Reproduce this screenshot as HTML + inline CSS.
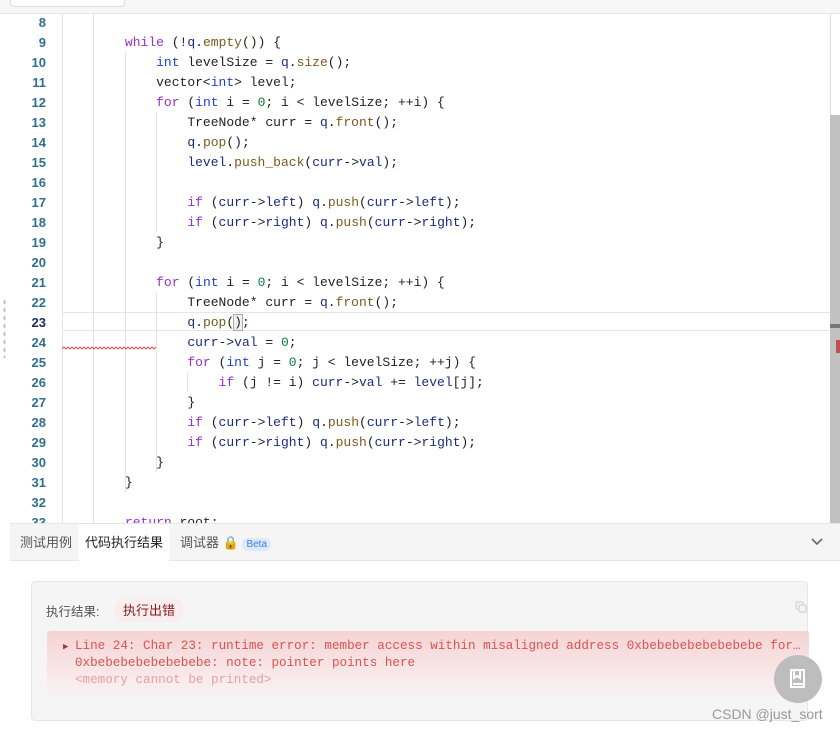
<!DOCTYPE html>
<html><head><meta charset="utf-8"><style>
*{margin:0;padding:0;box-sizing:border-box}
body{width:840px;height:731px;overflow:hidden;background:#fff;font-family:"Liberation Sans","Noto Sans CJK SC",sans-serif;position:relative}
.top{position:absolute;left:0;top:0;width:840px;height:14px;background:#f7f7f8;border-bottom:1px solid #e8e8e8}
.btn{position:absolute;left:10px;top:-8px;width:115px;height:15px;border:1px solid #ddd;border-radius:4px;background:#fff}
.ed{position:absolute;left:10px;top:14px;width:820px;height:510px;background:#fff;overflow:hidden}
.ln{position:absolute;left:0;top:-1px;width:36px;text-align:right;font:600 13px/20px "Liberation Sans",sans-serif;color:#2f6f8f}
.code{position:absolute;left:52.5px;top:-1px;font:13px/20px "Liberation Mono",monospace;color:#1f1f1f;white-space:pre}
.g{position:absolute;width:1px;background:#e2e2e2}
.k{color:#9a2ed1}.t{color:#2040d0}.v{color:#1a2b80}.f{color:#7a5a1e}.n{color:#0b7a3e}
.cur{position:absolute;left:52px;top:298px;width:768px;height:19px;border-top:1px solid #e6e6e6;border-bottom:1px solid #e6e6e6}
.sb{position:absolute;left:830px;top:14px;width:10px;height:510px;border-left:1px solid #ddd;background:#fff}
.thumb{position:absolute;left:830px;top:115px;width:10px;height:409px;background:#c1c1c1}
.tabs{position:absolute;left:10px;top:523px;width:830px;height:38px;background:#f5f5f5;border-top:1px solid #e5e5e5;border-bottom:1px solid #e8e8e8;font-size:13px;color:#555}
.tab{position:absolute;top:0;height:37px;line-height:37px}
.res{position:absolute;left:31px;top:581px;width:777px;height:140px;background:#f5f5f5;border:1px solid #e6e6e6;border-radius:4px}
.err{position:absolute;left:15px;top:49px;width:762px;height:65px;background:linear-gradient(#f5d3d4,#f9eced 80%,#f7f2f2);border-radius:3px;font:12.6px/17px "Liberation Mono",monospace;color:#d9534f;padding:7px 0 0 28px}
.el{white-space:pre;overflow:hidden;text-overflow:ellipsis;width:730px}
</style></head><body>
<div class="top"><div class="btn"></div></div>
<div class="ed">
<div class="cur"></div>
<div class="g" style="left:52px;top:0;height:510px"></div>
<div class="g" style="left:83px;top:0;height:510px"></div>
<div class="g" style="left:115px;top:38px;height:440px"></div>
<div class="g" style="left:146px;top:98px;height:120px"></div>
<div class="g" style="left:146px;top:278px;height:180px"></div>
<div class="g" style="left:177px;top:358px;height:20px"></div>
<div class="ln">8<br>9<br>10<br>11<br>12<br>13<br>14<br>15<br>16<br>17<br>18<br>19<br>20<br>21<br>22<br><span style="color:#1a2b60">23</span><br>24<br>25<br>26<br>27<br>28<br>29<br>30<br>31<br>32<br>33</div>
<div class="code">
        <span class="k">while</span> (!<span class="v">q</span>.<span class="f">empty</span>()) {
            <span class="t">int</span> levelSize = <span class="v">q</span>.<span class="f">size</span>();
            vector&lt;<span class="t">int</span>&gt; level;
            <span class="k">for</span> (<span class="t">int</span> i = <span class="n">0</span>; i &lt; levelSize; ++i) {
                TreeNode* curr = <span class="v">q</span>.<span class="f">front</span>();
                <span class="v">q</span>.<span class="f">pop</span>();
                <span class="v">level</span>.<span class="f">push_back</span>(<span class="v">curr</span>-&gt;<span class="v">val</span>);

                <span class="k">if</span> (<span class="v">curr</span>-&gt;<span class="v">left</span>) <span class="v">q</span>.<span class="f">push</span>(<span class="v">curr</span>-&gt;<span class="v">left</span>);
                <span class="k">if</span> (<span class="v">curr</span>-&gt;<span class="v">right</span>) <span class="v">q</span>.<span class="f">push</span>(<span class="v">curr</span>-&gt;<span class="v">right</span>);
            }

            <span class="k">for</span> (<span class="t">int</span> i = <span class="n">0</span>; i &lt; levelSize; ++i) {
                TreeNode* curr = <span class="v">q</span>.<span class="f">front</span>();
                <span class="v">q</span>.<span class="f">pop</span>(<span style="outline:1px solid #aaa;background:#eef2ee">)</span>;
                <span class="v">curr</span>-&gt;<span class="v">val</span> = <span class="n">0</span>;
                <span class="k">for</span> (<span class="t">int</span> j = <span class="n">0</span>; j &lt; levelSize; ++j) {
                    <span class="k">if</span> (j != i) <span class="v">curr</span>-&gt;<span class="v">val</span> += <span class="v">level</span>[j];
                }
                <span class="k">if</span> (<span class="v">curr</span>-&gt;<span class="v">left</span>) <span class="v">q</span>.<span class="f">push</span>(<span class="v">curr</span>-&gt;<span class="v">left</span>);
                <span class="k">if</span> (<span class="v">curr</span>-&gt;<span class="v">right</span>) <span class="v">q</span>.<span class="f">push</span>(<span class="v">curr</span>-&gt;<span class="v">right</span>);
            }
        }

        <span class="k">return</span> root;</div>
<svg style="position:absolute;left:52px;top:332px" width="94" height="6"><path d="M0 3 l2 -2 l2 2 l2 -2 l2 2 l2 -2 l2 2 l2 -2 l2 2 l2 -2 l2 2 l2 -2 l2 2 l2 -2 l2 2 l2 -2 l2 2 l2 -2 l2 2 l2 -2 l2 2 l2 -2 l2 2 l2 -2 l2 2 l2 -2 l2 2 l2 -2 l2 2 l2 -2 l2 2 l2 -2 l2 2 l2 -2 l2 2 l2 -2 l2 2 l2 -2 l2 2 l2 -2 l2 2 l2 -2 l2 2 l2 -2 l2 2 l2 -2 l2 2 l2 -2 l2 2" fill="none" stroke="#e05050" stroke-width="1"/></svg>
</div>
<div style="position:absolute;left:3px;top:298px;width:3px;height:60px;background-image:radial-gradient(#bbb 0.8px,transparent 1px);background-size:3px 8px"></div>
<div class="sb"></div><div class="thumb"></div>
<div style="position:absolute;left:830px;top:324px;width:10px;height:4px;background:#777"></div>
<div style="position:absolute;left:836px;top:340px;width:4px;height:13px;background:#c05050"></div>
<div class="tabs">
<div class="tab" style="left:10px">测试用例</div>
<div class="tab" style="left:69px;width:90px;background:#fff;text-align:center;color:#222;height:38px">代码执行结果</div>
<div class="tab" style="left:170px">调试器 <span style="color:#f0a020">🔒</span> <span style="font-size:10px;color:#3d7fe0;background:#dde9fb;border-radius:6px;padding:1px 4px">Beta</span></div>
<svg style="position:absolute;left:800px;top:13px" width="14" height="10"><path d="M2 2 L7 7 L12 2" fill="none" stroke="#666" stroke-width="1.6"/></svg>
</div>
<div class="res">
<div style="position:absolute;left:14px;top:19px;font-size:12.5px;color:#555">执行结果:</div>
<div style="position:absolute;left:83px;top:15px;padding:3px 8px;border-radius:10px;background:#f9eeee;font-size:13px;color:#8a1a1a">执行出错</div>
<svg style="position:absolute;left:763px;top:19px" width="12" height="12"><rect x="1" y="1" width="7" height="7" rx="1" fill="none" stroke="#ccc"/><rect x="4" y="4" width="7" height="7" rx="1" fill="#f5f5f5" stroke="#ccc"/></svg>
<div class="err"><span style="position:absolute;left:16px;top:8px;color:#a33;font-size:9px">▶</span><div class="el">Line 24: Char 23: runtime error: member access within misaligned address 0xbebebebebebebebe for type 'TreeNode'</div><div class="el">0xbebebebebebebebe: note: pointer points here</div><div class="el" style="color:#e8a0a0">&lt;memory cannot be printed&gt;</div></div>
</div>
<div style="position:absolute;left:774px;top:655px;width:48px;height:48px;border-radius:50%;background:#bdbdbd"></div>
<svg style="position:absolute;left:788px;top:668px" width="20" height="22"><path d="M3 2 h13 v17 h-13 z M6 2 v8 l3 -2 l3 2 v-8 M5 16 h10" fill="none" stroke="#fff" stroke-width="2"/></svg>
<div style="position:absolute;left:712px;top:706px;font-size:14px;color:#999">CSDN @just_sort</div>
</body></html>
